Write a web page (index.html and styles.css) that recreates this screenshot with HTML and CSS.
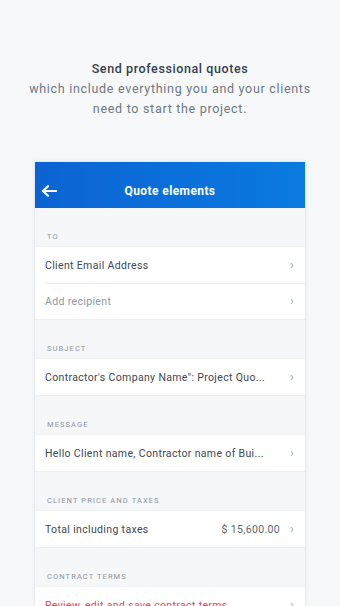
FILE: index.html
```html
<!DOCTYPE html>
<html>
<head>
<meta charset="utf-8">
<link rel="stylesheet" href="styles.css">
</head>
<body>
<div class="intro">
  <div class="intro-title">Send professional quotes</div>
  <div class="intro-text">which include everything you and your clients<br>need to start the project.</div>
</div>
<div class="card">
  <div class="header">
    <svg class="back" width="16" height="12" viewBox="0 0 16 12"><path d="M15 6H2.5M7 1.2L2 6l5 4.8" fill="none" stroke="#fff" stroke-width="2.2" stroke-linecap="round" stroke-linejoin="round"/></svg>
    <div class="header-title">Quote elements</div>
  </div>
  <div class="section-label">TO</div>
  <div class="group">
    <div class="row"><span class="row-text">Client Email Address</span><span class="chev">›</span></div>
    <div class="row divided"><span class="row-text muted">Add recipient</span><span class="chev">›</span></div>
  </div>
  <div class="section-label">SUBJECT</div>
  <div class="group">
    <div class="row"><span class="row-text">Contractor's Company Name": Project Quo...</span><span class="chev">›</span></div>
  </div>
  <div class="section-label">MESSAGE</div>
  <div class="group">
    <div class="row"><span class="row-text">Hello Client name, Contractor name of Bui...</span><span class="chev">›</span></div>
  </div>
  <div class="section-label">CLIENT PRICE AND TAXES</div>
  <div class="group">
    <div class="row"><span class="row-text">Total including taxes</span><span class="value">$ 15,600.00</span><span class="chev">›</span></div>
  </div>
  <div class="section-label">CONTRACT TERMS</div>
  <div class="group">
    <div class="row"><span class="row-text danger">Review, edit and save contract terms</span><span class="chev">›</span></div>
  </div>
</div>
</body>
</html>
```
FILE: styles.css
```css
html, body {
  margin: 0;
  padding: 0;
  background: #f7f8fa;
  font-family: Roboto, "Liberation Sans", sans-serif;
  height: 606px;
  overflow: hidden;
}
.intro {
  padding-top: 59px;
  text-align: center;
}
.intro-title {
  font-size: 12.5px;
  line-height: 20px;
  font-weight: 500;
  color: #34404b;
  letter-spacing: 0.6px;
}
.intro-text {
  font-size: 12.5px;
  line-height: 20px;
  color: #6e7882;
  letter-spacing: 0.7px;
}
.card {
  width: 272px;
  margin: 42px auto 0;
  background: #f6f7f9;
  border: 1px solid #e7eaee;
  border-bottom: none;
  box-shadow: 0 0 4px rgba(0,0,0,0.05);
  height: 460px;
  box-sizing: border-box;
}
.header {
  height: 46px;
  background: linear-gradient(90deg, #0c63d2, #0a7be0);
  display: flex;
  align-items: flex-end;
  padding: 0 0 10px 6px;
  box-sizing: border-box;
  position: relative;
}
.back {
  display: block;
  margin-bottom: 1px;
}
.header-title {
  position: absolute;
  left: 0;
  right: 0;
  bottom: 10px;
  text-align: center;
  color: #fff;
  font-weight: 700;
  font-size: 12px;
  line-height: 14px;
  letter-spacing: 0.4px;
}
.section-label {
  padding: 24px 0 4px 12px;
  font-size: 7.5px;
  line-height: 10px;
  color: #8c959e;
  letter-spacing: 1.1px;
}
.group {
  background: #fff;
  border-top: 1px solid #f0f2f4;
  border-bottom: 1px solid #eceef1;
}
.row {
  height: 36px;
  display: flex;
  align-items: center;
  padding: 0 11px 0 10px;
  position: relative;
}
.row.divided::before {
  content: "";
  position: absolute;
  top: 0;
  left: 10px;
  right: 0;
  border-top: 1px solid #eceef1;
}
.row-text {
  flex: 1;
  font-size: 10.5px;
  color: #3d4852;
  white-space: nowrap;
  overflow: hidden;
  letter-spacing: 0.35px;
}
.row-text.muted {
  color: #8f98a1;
}
.row-text.danger {
  color: #e2474d;
}
.value {
  font-size: 10.5px;
  color: #5b6670;
  margin-right: 10px;
  letter-spacing: 0.35px;
}
.chev {
  font-size: 13px;
  color: #a3abb3;
  line-height: 1;
  margin-bottom: 1px;
}
```
